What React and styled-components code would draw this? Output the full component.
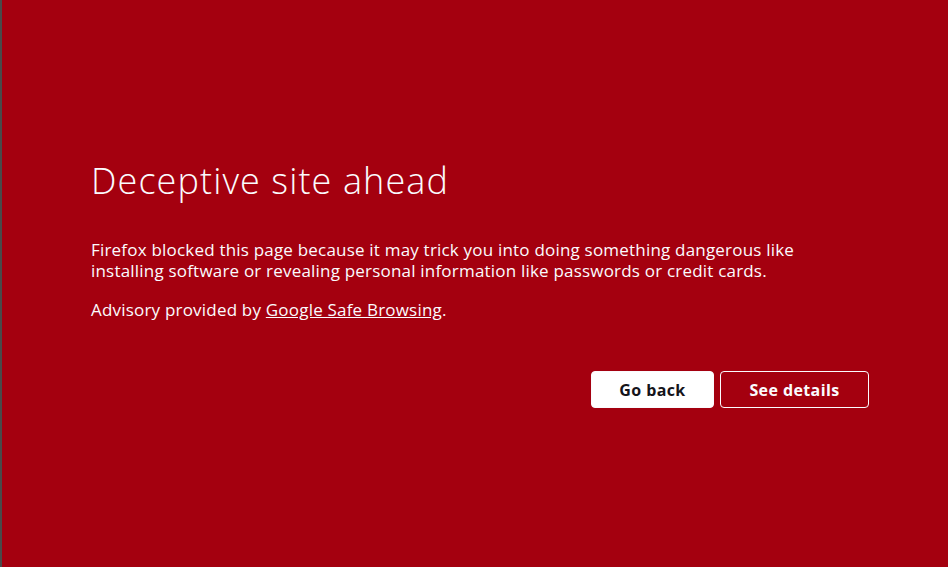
import React from 'react';
import styled, { createGlobalStyle } from 'styled-components';

const GlobalStyle = createGlobalStyle`
  html, body {
    margin: 0;
    height: 100%;
  }
  body {
    background: #a4000f;
    font-family: "Open Sans", "Noto Sans", sans-serif;
  }
  #root {
    height: 100%;
  }
`;

const Page = styled.div`
  box-sizing: border-box;
  height: 100%;
  border-left: 2px solid #4a4a4a;
  display: flex;
  align-items: center;
  padding: 0 0 0 89px;
  color: #fbfbfe;
`;

const Container = styled.div`
  width: 778px;
  margin-top: 0;
`;

const Title = styled.h1`
  margin: 0 0 36px;
  font-size: 36px;
  font-weight: 300;
  line-height: 44px;
  letter-spacing: 1.1px;
  color: #fbfbfe;
`;

const Text = styled.p`
  margin: 0 0 ${(p) => p.$gap || 18}px;
  font-size: 17px;
  line-height: 21px;
  letter-spacing: 0.2px;
  width: 720px;
`;

const Link = styled.a`
  color: inherit;
  text-decoration: underline;
`;

const Actions = styled.div`
  display: flex;
  justify-content: flex-end;
  gap: 6px;
  margin-top: 51px;
`;

const Button = styled.button`
  box-sizing: border-box;
  width: ${(p) => p.$width}px;
  height: 37px;
  padding: 0;
  border-radius: 4px;
  font-family: inherit;
  font-size: 16px;
  font-weight: 700;
  letter-spacing: 0.4px;
  cursor: pointer;
  border: 1px solid #fbfbfe;
  background: ${(p) => (p.$primary ? '#fff' : 'transparent')};
  color: ${(p) => (p.$primary ? '#15141a' : '#fbfbfe')};
`;

export default function App() {
  return (
    <>
      <GlobalStyle />
      <Page>
        <Container>
          <Title>Deceptive site ahead</Title>
          <Text>
            Firefox blocked this page because it may trick you into doing something dangerous like
            installing software or revealing personal information like passwords or credit cards.
          </Text>
          <Text $gap={0}>
            Advisory provided by <Link href="#">Google Safe Browsing</Link>.
          </Text>
          <Actions>
            <Button $primary $width={123}>Go back</Button>
            <Button $width={149}>See details</Button>
          </Actions>
        </Container>
      </Page>
    </>
  );
}
